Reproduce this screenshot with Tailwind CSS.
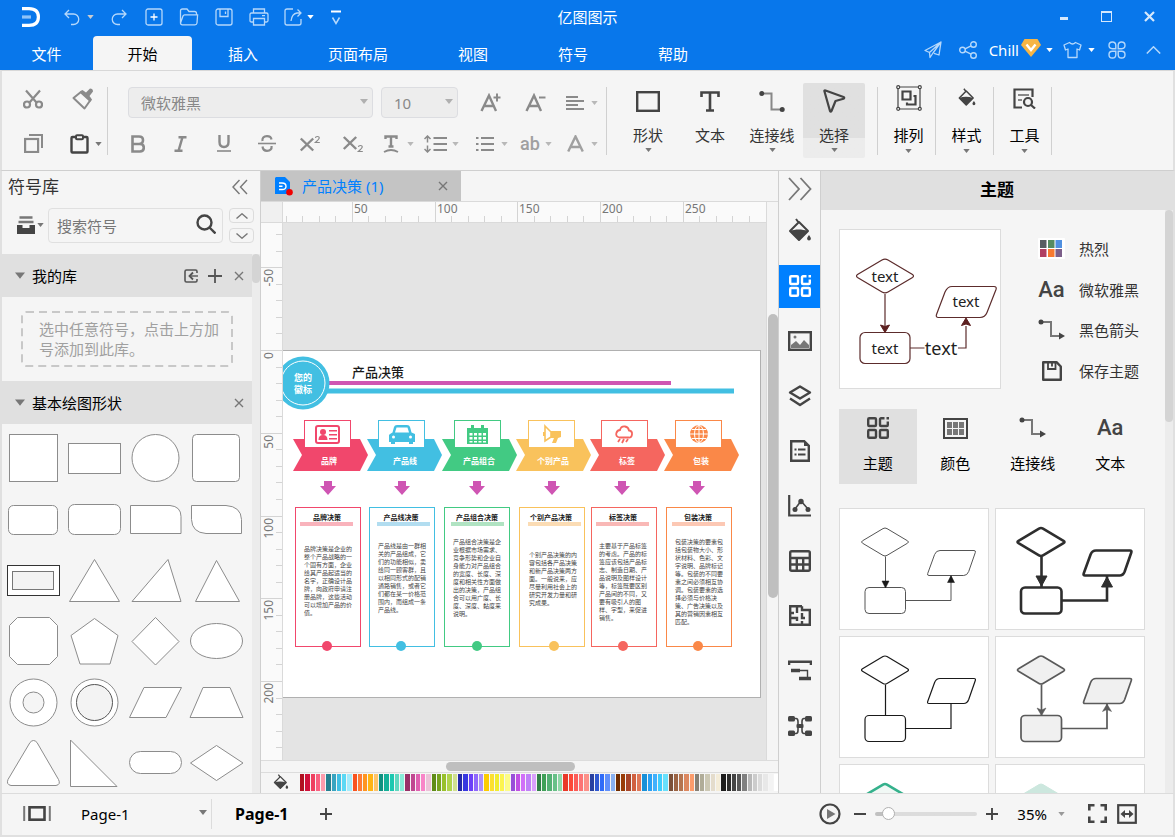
<!DOCTYPE html>
<html lang="zh-Hans">
  <head>
    <meta charset="UTF-8" />
    <meta name="viewport" content="width=device-width, initial-scale=1.0" />
    <title>亿图图示</title>
    <script src="https://cdn.jsdelivr.net/npm/@tailwindcss/browser@4"></script>
  </head>
  <body class="h-screen flex flex-col overflow-hidden bg-[#f5f5f5] text-[15px] leading-5 text-[#333] font-['Noto_Sans','Noto_Sans_CJK_SC',sans-serif]">
    <!-- 共用圖示 -->
    <svg class="hidden">
      <symbol id="caret" viewBox="0 0 8 5"><path d="M0 0h8L4 5z" fill="currentColor" /></symbol>
      <symbol id="close" viewBox="0 0 10 10"><path d="M1 1l8 8M9 1l-8 8" stroke="currentColor" stroke-width="1.4" fill="none" /></symbol>
      <symbol id="plus" viewBox="0 0 14 14"><path d="M7 0v14M0 7h14" stroke="currentColor" stroke-width="2.200" fill="none" /></symbol>
      <symbol id="bucket" viewBox="0 0 24 26">
        <path d="M8 1l3 4M11 4l9 9-9 9-9-9z" fill="none" stroke="currentColor" stroke-width="2" stroke-linejoin="round" />
        <path d="M2 13c5-2 12-2 18 0l-9 9.500z" fill="currentColor" />
        <path d="M21 17c1 1.600 1.900 2.500 1.900 3.500a1.900 1.900 0 0 1-3.800 0c0-1 .9-1.900 1.900-3.500z" fill="currentColor" />
      </symbol>
      <symbol id="themes" viewBox="0 0 22 22">
        <g fill="none" stroke="currentColor" stroke-width="2.400">
          <rect x="1.200" y="1.200" width="7.800" height="7.800" rx="1" />
          <rect x="1.200" y="13" width="7.800" height="7.800" rx="1" />
          <rect x="13" y="13" width="7.800" height="7.800" rx="1" />
          <path d="M17.500 1.200H14a1 1 0 0 0-1 1V8a1 1 0 0 0 1 1h5.800a1 1 0 0 0 1-1V4.500" />
        </g>
        <path d="M19.500 0H22v2.500h-2.500z" fill="currentColor" />
      </symbol>
      <symbol id="connector" viewBox="0 0 28 22">
        <path d="M4 3h9v14h8" fill="none" stroke="#777" stroke-width="2" />
        <circle cx="3" cy="3" r="2.500" fill="#444" />
        <path d="M21 13.500l6 3.500-6 3.500z" fill="#444" />
      </symbol>
      <symbol id="save" viewBox="0 0 20 20">
        <path d="M1.200 1.200h13.300l4.300 4.300v13.300H1.200z" fill="none" stroke="currentColor" stroke-width="2.400" stroke-linejoin="round" />
        <path d="M6 1.500v6.500h7.500V1.500M10 2v3.500" fill="none" stroke="currentColor" stroke-width="1.800" />
      </symbol>
      <symbol id="flow" viewBox="0 0 150 122">
        <path d="M44 20.600q2-1.200 4 0l20.500 12.200q2 1.200 0 2.400L48 47.400q-2 1.200-4 0L23.500 35.200q-2-1.200 0-2.400z" />
        <rect x="26" y="79.500" width="40.500" height="26" rx="4" />
        <path d="M101 42.500h34q2 0 1.300 2l-6.600 19q-1.500 4-5 4H90q-2 0-1.300-2l6.900-19q1.500-4 5.400-4z" />
        <path d="M46.500 48.500v31M66.500 92.500h45.500v-25" fill="none" />
      </symbol>
    </svg>

    <header class="bg-[#0877eb] text-white shrink-0">
      <!-- 標題列 -->
      <div class="h-9 pb-[2px] grid grid-cols-[1fr_auto_1fr] items-center">
        <div class="flex items-center text-[#b5d8fb]">
          <svg class="ml-[22px] w-[18px] h-5" viewBox="0 0 18 20" fill="none" stroke="#fff" stroke-width="3.200">
            <path d="M0 1.600h7q9.400 0 9.400 8.400T7 18.400H0" />
            <path d="M0 10h9" stroke="#8fc3f8" />
          </svg>
          <button aria-label="撤销" class="ml-[23px]">
            <svg class="w-[18px] h-[18px]" viewBox="0 0 18 18" fill="none" stroke="currentColor" stroke-width="1.300"><path d="M6 2L2 6l4 4M2 6h8.500a5 5 0 0 1 0 10.500H8" /></svg>
          </button>
          <button aria-label="撤销列表" class="ml-[6px] text-[#c9ccd0]"><svg class="w-[7px] h-[4px]"><use href="#caret" /></svg></button>
          <div class="ml-[7px] flex">
            <button aria-label="重做" class="w-[35px] flex justify-center">
              <svg class="w-[18px] h-[18px]" viewBox="0 0 18 18" fill="none" stroke="currentColor" stroke-width="1.300"><path d="M12 2l4 4-4 4M16 6H7.500a5 5 0 0 0 0 10.500H10" /></svg>
            </button>
            <button aria-label="新建" class="w-[35px] flex justify-center">
              <svg class="w-[18px] h-[18px]" viewBox="0 0 18 18" fill="none" stroke="currentColor" stroke-width="1.300"><rect x="1" y="1" width="16" height="16" rx="2" /><path d="M9 5.500v7M5.500 9h7" stroke="#fff" /></svg>
            </button>
            <button aria-label="打开" class="w-[35px] flex justify-center">
              <svg class="w-5 h-[18px]" viewBox="0 0 20 18" fill="none" stroke="currentColor" stroke-width="1.300"><path d="M1.500 15V3q0-2 2-2H8l2 2.500h5.500q2 0 2 2V7M1.500 15L4 8q.4-1.200 1.600-1.200h13L18 15q-.3 1.800-2 1.800H3.300q-1.800 0-1.800-1.800z" /></svg>
            </button>
            <button aria-label="保存" class="w-[35px] flex justify-center">
              <svg class="w-[18px] h-[18px]" viewBox="0 0 18 18" fill="none" stroke="currentColor" stroke-width="1.300"><rect x="1" y="1" width="16" height="16" rx="2" /><path d="M5 1v7.500h8V1M10.500 3.500v2.500" /></svg>
            </button>
            <button aria-label="打印" class="w-[35px] flex justify-center">
              <svg class="w-5 h-[18px]" viewBox="0 0 20 18" fill="none" stroke="currentColor" stroke-width="1.300"><path d="M4.500 5V1h11v4M4.500 14H2.500Q1 14 1 12.500v-6Q1 5 2.500 5h15Q19 5 19 6.500v6q0 1.500-1.500 1.500h-2M4.500 10.500h11V17h-11zM13 7.700h3" /></svg>
            </button>
            <button aria-label="导出" class="ml-2 flex items-center gap-[5px]">
              <svg class="w-[18px] h-[18px]" viewBox="0 0 18 18" fill="none" stroke="currentColor" stroke-width="1.300"><path d="M9 1H3Q1 1 1 3v12q0 2 2 2h12q2 0 2-2v-4M13.500 1.500l3.500 3.500-3.500 3.500M17 5h-4q-5 .5-6 8" /></svg>
              <svg class="w-[7px] h-[4px] text-white"><use href="#caret" /></svg>
            </button>
            <button aria-label="自定义" class="ml-[17px]">
              <svg class="w-[10px] h-[15px]" viewBox="0 0 10 15" fill="none" stroke="currentColor"><path d="M0 1.500h10" stroke="#fff" stroke-width="2" /><path d="M1.500 7.500L5 13.500l3.500-6" stroke-width="1.500" /></svg>
            </button>
          </div>
        </div>
        <h1>亿图图示</h1>
        <div class="flex justify-end pr-[4px] text-[#d5e8fc]">
          <button aria-label="最小化" class="w-[43px] h-6 flex items-center justify-center"><span class="w-2 h-[3px] mt-[3px] bg-current"></span></button>
          <button aria-label="最大化" class="w-[43px] h-6 pb-[2px] flex items-center justify-center"><span class="w-[11px] h-[11px] border border-t-2 border-current"></span></button>
          <button aria-label="关闭" class="w-[43px] h-6 pb-[2px] flex items-center justify-center">
            <svg class="w-[11px] h-[11px]" viewBox="0 0 11 11" stroke="currentColor" stroke-width="2.200"><path d="M1 1l9 9M10 1l-9 9" /></svg>
          </button>
        </div>
      </div>

      <!-- 功能區分頁 -->
      <div class="h-[34px] flex items-stretch">
        <nav class="flex">
          <button class="w-[93px] pt-[2px]">文件</button>
          <button class="w-[99px] pt-[2px] mr-px rounded-t-sm bg-[#f5f5f5] text-black">开始</button>
          <button class="px-[35px] pt-[2px]">插入</button>
          <button class="px-[35px] pt-[2px]">页面布局</button>
          <button class="px-[35px] pt-[2px]">视图</button>
          <button class="px-[35px] pt-[2px]">符号</button>
          <button class="px-[35px] pt-[2px]">帮助</button>
        </nav>
        <div class="ml-auto mr-[14px] pb-[6px] flex items-center text-[#b5d8fb]">
          <button aria-label="发送">
            <svg class="w-[18px] h-[18px]" viewBox="0 0 18 18" fill="none" stroke="currentColor" stroke-width="1.300" stroke-linejoin="round"><path d="M17 1L1 9.500l4.500 2L17 1l-2 13-5-1.700M5.500 11.500L6 16.500l3-4.500L17 1" /></svg>
          </button>
          <button aria-label="分享" class="ml-[17px]">
            <svg class="w-[18px] h-[18px]" viewBox="0 0 18 18" fill="none" stroke="currentColor" stroke-width="1.400"><circle cx="3.500" cy="9" r="2.800" /><circle cx="14.500" cy="3.500" r="2.800" /><circle cx="14.500" cy="14.500" r="2.800" /><path d="M6 7.800l6-3M6 10.200l6 3" /></svg>
          </button>
          <button class="ml-3 flex items-center text-white">
            Chill
            <svg class="ml-[2px] mb-1 w-5 h-[18px]" viewBox="0 0 20 18"><path d="M3.500 0h13L20 6 10 18 0 6z" fill="#f6b545" /><path d="M5.500 5.500L10 11l4.500-5.500" stroke="#fff" stroke-width="2.400" fill="none" /></svg>
            <svg class="ml-[5px] w-[7px] h-[4px]"><use href="#caret" /></svg>
          </button>
          <button aria-label="皮肤" class="ml-[10px] flex items-center">
            <svg class="w-[19px] h-[18px]" viewBox="0 0 19 18" fill="none" stroke="currentColor" stroke-width="1.300" stroke-linejoin="round"><path d="M6.500 1.500q3 3 6 0L18 4l-1.500 5L14 8v8.500H5V8L2.500 9 1 4z" /></svg>
            <svg class="ml-[6px] w-[7px] h-[4px] text-white"><use href="#caret" /></svg>
          </button>
          <button aria-label="应用" class="ml-[13px]">
            <svg class="w-[18px] h-[18px]" viewBox="0 0 18 18" fill="none" stroke="currentColor" stroke-width="1.400"><path d="M7.800 7.800H4.300A3.400 3.400 0 1 1 7.800 4.300zM10.200 7.800h3.500a3.400 3.400 0 1 0-3.500-3.500zM7.800 10.200H4.300a3.400 3.400 0 1 0 3.500 3.500zM10.200 10.200h3.500a3.400 3.400 0 1 1-3.500 3.500z" /></svg>
          </button>
          <button aria-label="收起" class="ml-5">
            <svg class="w-[15px] h-[8px]" viewBox="0 0 15 8" fill="none" stroke="currentColor" stroke-width="1.500"><path d="M.8 7.500l6.700-6.700 6.700 6.700" /></svg>
          </button>
        </div>
      </div>
    </header>

    <!-- 工具列 -->
    <section class="h-[100px] shrink-0 flex items-start border-x-2 border-[#e0e0e0] border-t border-t-[#d8d8d8] text-[#8a8a8a]">
      <div class="w-[105px] pl-[10px] pt-[5px] grid grid-cols-[42px_42px] gap-x-2 auto-rows-[45px]">
        <button aria-label="剪切" class="flex items-center justify-center">
          <svg class="w-5 h-5" viewBox="0 0 20 20" fill="none" stroke="currentColor" stroke-width="2.200"><path d="M3 1.500l10.500 12M17 1.500L6.500 13.500" /><circle cx="4" cy="15.500" r="3" /><circle cx="16" cy="15.500" r="3" /></svg>
        </button>
        <button aria-label="格式刷" class="flex items-center justify-center">
          <svg class="w-[22px] h-[22px]" viewBox="0 0 22 22"><path d="M1.500 10l8-6.500 9 8.500-6 8.500z" fill="none" stroke="currentColor" stroke-width="2" stroke-linejoin="round" /><path d="M7.500 4.500l3-2.500 3.500 2.500L18 .5q3 0 3 3L17.500 8l2.500 3.500-2 2.500z" fill="currentColor" /></svg>
        </button>
        <button aria-label="复制" class="flex items-center justify-center">
          <svg class="w-[19px] h-[19px]" viewBox="0 0 19 19" fill="none" stroke="currentColor" stroke-width="2.200"><rect x="1.100" y="5" width="13" height="13" /><path d="M5 1h13v13" stroke-width="2" /></svg>
        </button>
        <button aria-label="粘贴" class="pl-2 flex items-center gap-[6px] text-[#444]">
          <svg class="w-[19px] h-5 shrink-0" viewBox="0 0 19 20" fill="none" stroke="currentColor" stroke-width="2.400"><rect x="1.500" y="3" width="16" height="15.500" rx="1" /><rect x="6" y="1.200" width="7" height="4" rx="1" fill="#f5f5f5" stroke-width="2" /></svg>
          <svg class="w-[7px] h-[4px] shrink-0 text-[#777]"><use href="#caret" /></svg>
        </button>
      </div>
      <div class="w-px h-[68px] mt-4 bg-[#d0d0d0]"></div>

      <div class="pl-2 pr-2 pt-[6px]">
        <div class="h-[45px] pl-3 flex items-center">
          <div class="relative mt-[6px]">
            <select aria-label="字体" class="appearance-none w-[245px] h-[31px] pl-3 rounded-sm border border-[#dcdde1] bg-[#ededed] text-[#888]"><option>微软雅黑</option></select>
            <svg class="absolute right-[5px] top-3 w-2 h-[5px] text-[#b0b0b0]"><use href="#caret" /></svg>
          </div>
          <div class="relative ml-2 mt-[6px]">
            <select aria-label="字号" class="appearance-none w-[77px] h-[31px] pl-3 rounded-sm border border-[#dcdde1] bg-[#ededed] text-[#888]"><option>10</option></select>
            <svg class="absolute right-[5px] top-3 w-2 h-[5px] text-[#b0b0b0]"><use href="#caret" /></svg>
          </div>
          <button aria-label="增大字号" class="ml-[22px] mt-[6px]">
            <svg class="w-[21px] h-[19px]" viewBox="0 0 21 19" fill="none" stroke="currentColor" stroke-width="2.400"><path d="M1.500 18L9 2.500 16 18M4.500 13H13" /><path d="M17 .5v8M13.500 4.500h7" stroke-width="2" /></svg>
          </button>
          <button aria-label="减小字号" class="ml-6 mt-[6px]">
            <svg class="w-[21px] h-[19px]" viewBox="0 0 21 19" fill="none" stroke="currentColor" stroke-width="2.400"><path d="M1.500 18L9 2.500 16 18M4.500 13H13" /><path d="M14 4.500h6.500" stroke-width="2" /></svg>
          </button>
          <button aria-label="对齐" class="ml-5 mt-[6px] flex items-center gap-[7px]">
            <svg class="w-[18px] h-[14px]" viewBox="0 0 18 14" fill="none" stroke="currentColor" stroke-width="2.200"><path d="M0 1h12M0 5h18M0 9h12M0 13h18" /></svg>
            <svg class="w-[7px] h-[4px] text-[#b8b8b8]"><use href="#caret" /></svg>
          </button>
        </div>
        <div class="h-[45px] pb-[2px] flex items-center">
          <button aria-label="加粗" class="w-[43px] flex justify-center"><svg class="w-[14px] h-[18px]" viewBox="0 0 14 18" fill="none" stroke="currentColor" stroke-width="2.600"><path d="M1.500 1.500H8q4 0 4 3.700T8 9H1.500zM1.500 9H9q3.800 0 3.800 3.700T9 16.500H1.500z" /></svg></button>
          <button aria-label="斜体" class="w-[43px] flex justify-center"><svg class="w-[13px] h-[16px]" viewBox="0 0 13 16" fill="none" stroke="currentColor" stroke-width="2.400"><path d="M4.500 1.200h8M.5 14.800h8M8.500 1.200l-4 13.600" /></svg></button>
          <button aria-label="下划线" class="w-[43px] flex justify-center"><svg class="w-[14px] h-[17px]" viewBox="0 0 14 17" fill="none" stroke="currentColor"><path d="M2.500 0v7q0 5 4.500 5t4.500-5V0" stroke-width="2.400" /><path d="M0 16h14" stroke-width="1.600" /></svg></button>
          <button aria-label="删除线" class="w-[43px] flex justify-center"><svg class="w-[18px] h-[17px]" viewBox="0 0 18 17" fill="none" stroke="currentColor"><path d="M4.500 6q-.7-4.800 4.500-4.800 4 0 4.500 3.300M4.500 11.500q.5 4.300 4.500 4.300 5 0 4.600-4.800" stroke-width="2.200" /><path d="M0 8.500h18" stroke-width="1.600" /></svg></button>
          <button aria-label="上标" class="w-[43px] flex justify-center"><svg class="w-5 h-[16px] overflow-visible" viewBox="0 0 20 16" fill="none" stroke="currentColor"><path d="M.8 2.500l12.400 12M13.200 2.500L.8 14.500" stroke-width="2.400" /><path d="M15.500 2q0-1.500 1.900-1.500T19.200 2q0 1-3.800 4.500h4.400" stroke-width="1.200" /></svg></button>
          <button aria-label="下标" class="w-[43px] flex justify-center"><svg class="w-5 h-[16px] overflow-visible" viewBox="0 0 20 16" fill="none" stroke="currentColor"><path d="M.8 1l12.400 12M13.200 1L.8 13" stroke-width="2.400" /><path d="M15.500 11q0-1.500 1.900-1.500t1.800 1.500q0 1-3.800 4.500h4.400" stroke-width="1.200" /></svg></button>
          <button aria-label="文字效果" class="ml-[9px] flex items-center gap-[8px]">
            <svg class="w-[16px] h-[18px]" viewBox="0 0 16 18" fill="none" stroke="currentColor" stroke-width="2.400"><path d="M2.500 4V1.500h11V4M8 1.500v9.500M5.500 11.500h5" /><path d="M1 17q7-4 14 0" stroke-width="1.800" /></svg>
            <svg class="w-[7px] h-[4px] text-[#b8b8b8]"><use href="#caret" /></svg>
          </button>
          <button aria-label="行距" class="ml-[10px] flex items-center gap-[5px]">
            <svg class="w-[23px] h-[18px]" viewBox="0 0 23 18" fill="none" stroke="currentColor"><path d="M9.500 3H23M9.500 9H23M9.500 15H23" stroke-width="2.200" /><path d="M3.500 7.500V1M.5 4l3-3 3 3M3.500 10.500V17M.5 14l3 3 3-3" stroke-width="1.500" /></svg>
            <svg class="w-[7px] h-[4px] text-[#b8b8b8]"><use href="#caret" /></svg>
          </button>
          <button aria-label="项目符号" class="ml-[17px] flex items-center gap-[6px]">
            <svg class="w-[19px] h-[18px]" viewBox="0 0 19 18" fill="none" stroke="currentColor" stroke-width="2.200"><path d="M5 3h13M5 9h13M5 15h13M0 3h2.500M0 9h2.500M0 15h2.500" /></svg>
            <svg class="w-[7px] h-[4px] text-[#b8b8b8]"><use href="#caret" /></svg>
          </button>
          <button class="ml-3 flex items-center gap-[5px] text-lg leading-5 font-medium text-[#a0a0a0] font-['Roboto']">
            ab
            <svg class="w-[7px] h-[4px] text-[#b8b8b8]"><use href="#caret" /></svg>
          </button>
          <button aria-label="字体颜色" class="ml-[15px] flex items-center gap-[7px]">
            <svg class="w-[17px] h-[17px] text-[#a0a0a0]" viewBox="0 0 17 17" fill="none" stroke="currentColor" stroke-width="2.400"><path d="M1.200 16.500L8.500 1.500l7.300 15M4.200 12h8.600" /></svg>
            <svg class="w-[7px] h-[4px] text-[#b8b8b8]"><use href="#caret" /></svg>
          </button>
        </div>
      </div>
      <div class="w-px h-[68px] mt-4 bg-[#d0d0d0]"></div>

      <div class="ml-[10px] mr-3 mt-3 flex text-[#333]">
        <button class="w-[62px] h-[75px] flex flex-col items-center">
          <span class="mt-[3px] h-[30px] flex items-center"><svg class="w-6 h-[21px]" viewBox="0 0 24 21" fill="none" stroke="#444" stroke-width="2.400"><rect x="1.200" y="1.200" width="21.600" height="18.600" /></svg></span>
          <span class="mt-[9px]">形状</span>
          <svg class="mt-[3px] w-[7px] h-[4px] shrink-0 text-[#777]"><use href="#caret" /></svg>
        </button>
        <button class="w-[62px] h-[75px] flex flex-col items-center">
          <span class="mt-[3px] h-[30px] flex items-center"><svg class="w-5 h-[21px]" viewBox="0 0 20 21" fill="none" stroke="#444" stroke-width="2.600"><path d="M1.500 6V1.500h17V6M10 1.500v18M6 19.500h8" /></svg></span>
          <span class="mt-[9px]">文本</span>
        </button>
        <button class="w-[62px] h-[75px] flex flex-col items-center">
          <span class="mt-[3px] h-[30px] flex items-center"><svg class="w-[26px] h-[21px]" viewBox="0 0 26 21"><path d="M3 2.500h9.500v16H23" fill="none" stroke="#888" stroke-width="2" /><circle cx="2.800" cy="2.600" r="2.500" fill="#444" /><circle cx="23.200" cy="18.400" r="2.500" fill="#444" /></svg></span>
          <span class="mt-[9px]">连接线</span>
          <svg class="mt-[3px] w-[7px] h-[4px] shrink-0 text-[#777]"><use href="#caret" /></svg>
        </button>
        <button class="w-[62px] h-[75px] flex flex-col items-center rounded-xs bg-linear-to-b from-[#e0e0e0] from-[55px] to-[#ececec] to-[55px]">
          <span class="mt-[3px] h-[30px] flex items-center"><svg class="w-6 h-6" viewBox="0 0 24 24" fill="none" stroke="#444" stroke-width="2.200" stroke-linejoin="round"><path d="M2.500 2.500Q2 1 3.500 1.500l18 6.500q1.500.8 0 1.800L13.500 12l-4 10q-.8 1.300-1.500 0z" /></svg></span>
          <span class="mt-[9px]">选择</span>
          <svg class="mt-[3px] w-[7px] h-[4px] shrink-0 text-[#777]"><use href="#caret" /></svg>
        </button>
      </div>
      <div class="w-px h-[68px] mt-4 bg-[#d0d0d0]"></div>
      <button class="w-[57px] h-[75px] mt-3 pl-[4px] flex flex-col items-center text-black">
        <span class="h-[30px] flex items-center"><svg class="w-[26px] h-[26px]" viewBox="0 0 26 26" fill="none" stroke="#444"><path d="M2 2h22v22H2z" stroke-width="1.200" /><path d="M6.500 6.500h8v8h-8zM17.500 11h2v8.500H11v-2" stroke-width="2.200" /><g fill="#f5f5f5" stroke-width="1.200"><circle cx="2.200" cy="2.200" r="1.500" /><circle cx="23.800" cy="2.200" r="1.500" /><circle cx="2.200" cy="23.800" r="1.500" /><circle cx="23.800" cy="23.800" r="1.500" /></g></svg></span>
        <span class="mt-3">排列</span>
        <svg class="mt-[4px] w-[7px] h-[4px] shrink-0 text-[#777]"><use href="#caret" /></svg>
      </button>
      <div class="w-px h-[68px] mt-4 bg-[#d0d0d0]"></div>
      <button class="w-[57px] h-[75px] mt-3 pl-[4px] flex flex-col items-center text-black">
        <span class="h-[30px] flex items-center"><svg class="w-5 h-5 text-[#444]"><use href="#bucket" /></svg></span>
        <span class="mt-3">样式</span>
        <svg class="mt-[4px] w-[7px] h-[4px] shrink-0 text-[#777]"><use href="#caret" /></svg>
      </button>
      <div class="w-px h-[68px] mt-4 bg-[#d0d0d0]"></div>
      <button class="w-[57px] h-[75px] mt-3 pl-[4px] flex flex-col items-center text-black">
        <span class="h-[30px] flex items-center"><svg class="w-[23px] h-[21px]" viewBox="0 0 23 21" fill="none" stroke="#444" stroke-width="2.200"><path d="M9 19.500H1.500v-18h18V9" /><path d="M5 7h11M5 12h4" stroke="#888" stroke-width="1.800" /><circle cx="15" cy="14" r="4" /><path d="M18 17l4 3.500" /></svg></span>
        <span class="mt-3">工具</span>
        <svg class="mt-[4px] w-[7px] h-[4px] shrink-0 text-[#777]"><use href="#caret" /></svg>
      </button>
      <div class="w-px h-[68px] mt-4 bg-[#d0d0d0]"></div>
    </section>

    <main class="flex-1 min-h-0 flex border-x-2 border-[#e0e0e0] border-t border-t-[#cfcfcf]">
      <!-- 符號庫 -->
      <aside class="w-[259px] shrink-0 flex flex-col border-r border-[#cfcfcf]">
        <div class="h-[33px] pb-[2px] pl-[6px] pr-[12px] flex items-center justify-between">
          <h2 class="text-[17px]">符号库</h2>
          <button aria-label="折叠" class="text-[#777]"><svg class="w-4 h-4" viewBox="0 0 16 16" fill="none" stroke="currentColor" stroke-width="1.400"><path d="M7.500 1L1 8l6.500 7M15 1L8.500 8l6.500 7" /></svg></button>
        </div>
        <div class="h-[50px] pl-[15px] pt-1 flex items-start shrink-0">
          <button aria-label="符号分类" class="mt-2 flex items-center gap-[2px] text-[#444]">
            <svg class="w-[18px] h-[18px]" viewBox="0 0 18 18"><path d="M2.500 1.500h13M1.500 6h15" stroke="#777" stroke-width="2.600" /><path d="M0 9h5.500v3h7V9H18v9H0z" fill="currentColor" /></svg>
            <svg class="w-[7px] h-[4px] text-[#777]"><use href="#caret" /></svg>
          </button>
          <div class="relative ml-[4px]">
            <input type="text" aria-label="搜索符号" placeholder="搜索符号" class="w-[175px] h-[35px] pl-2 rounded-sm border border-[#e0e0e0] bg-[#f5f5f5] placeholder:text-[#777]" />
            <svg class="absolute right-[7px] top-[6px] w-5 h-5" viewBox="0 0 20 20" fill="none" stroke="#444" stroke-width="2.400"><circle cx="8.500" cy="8.500" r="7" /><path d="M13.500 13.500l6 6" /></svg>
          </div>
          <div class="ml-[6px] flex flex-col gap-[5px] text-[#777]">
            <button aria-label="上一个" class="w-[25px] h-[15px] flex items-center justify-center rounded-sm border border-[#dcdcdc]"><svg class="w-3 h-[6px]" viewBox="0 0 12 6" fill="none" stroke="currentColor" stroke-width="1.400"><path d="M.5 5.500L6 .8l5.500 4.700" /></svg></button>
            <button aria-label="下一个" class="w-[25px] h-[15px] flex items-center justify-center rounded-sm border border-[#dcdcdc]"><svg class="w-3 h-[6px]" viewBox="0 0 12 6" fill="none" stroke="currentColor" stroke-width="1.400"><path d="M.5.500L6 5.200 11.500.5" /></svg></button>
          </div>
        </div>
        <div class="flex-1 min-h-0 flex">
          <div class="flex-1 min-w-0 overflow-hidden">
            <div class="h-[43px] pl-[13px] pr-[8px] flex items-center bg-[#e0e0e0] text-black">
              <svg class="w-[10px] h-[7px] text-[#777]"><use href="#caret" /></svg>
              <h3 class="ml-[7px] flex-1">我的库</h3>
              <button aria-label="导入" class="text-[#555]"><svg class="w-[14px] h-[14px]" viewBox="0 0 14 14" fill="none" stroke="currentColor" stroke-width="1.600"><path d="M13 4V2.500Q13 1 11.500 1h-9Q1 1 1 2.500v9Q1 13 2.500 13h9q1.500 0 1.500-1.500V10" /><path d="M14 7H6" stroke-width="1.400" /><path d="M9 3.500L5.500 7 9 10.500" stroke-width="1.800" /></svg></button>
              <button aria-label="添加" class="ml-[10px] text-[#555]"><svg class="w-[14px] h-[14px]" viewBox="0 0 14 14" stroke="currentColor" stroke-width="1.800"><path d="M7 0v14M0 7h14" /></svg></button>
              <button aria-label="关闭我的库" class="ml-[12px] text-[#777]"><svg class="w-[10px] h-[10px]"><use href="#close" /></svg></button>
            </div>
            <div class="h-[84px] pt-[14px] px-[19px]">
              <svg class="w-[212px] h-14 absolute" fill="none" stroke="#c8c8c8" stroke-width="2" stroke-dasharray="8 5"><rect x="1" y="1" width="210" height="54" rx="4" /></svg>
              <p class="h-14 pt-2 pl-[18px] text-[#a0a0a0]">选中任意符号，点击上方加<br />号添加到此库。</p>
            </div>
            <div class="h-[43px] pl-[13px] pr-[8px] flex items-center bg-[#e0e0e0] text-black">
              <svg class="w-[10px] h-[7px] text-[#777]"><use href="#caret" /></svg>
              <h3 class="ml-[7px] flex-1">基本绘图形状</h3>
              <button aria-label="关闭基本绘图形状" class="text-[#777]"><svg class="w-[10px] h-[10px]"><use href="#close" /></svg></button>
            </div>
            <div id="shapeGrid" class="pt-1 pl-px grid grid-cols-[repeat(4,61px)] auto-rows-[61px]"></div>
          </div>
          <div class="w-2 bg-[#ececec]"><div class="h-[29px] rounded-full bg-[#d4d4d4]"></div></div>
        </div>
      </aside>

      <!-- 畫布 -->
      <section class="flex-1 min-w-0 flex flex-col">
        <div class="h-[31px] shrink-0 flex border-b border-[#dadada]">
          <div class="w-[200px] pl-[14px] pr-[13px] flex items-center bg-[#c4c4c4]">
            <svg class="w-[18px] h-[19px]" viewBox="0 0 18 19"><path d="M1 0h9l5 5v12H0V1z" fill="#0080ff" /><path d="M4 6h3q4 0 4 3.300T7 12.500H4M4 9.300h3.500" stroke="#fff" stroke-width="1.400" fill="none" /><circle cx="14.500" cy="15.200" r="3.300" fill="#f00000" /></svg>
            <span class="ml-[9px] flex-1 text-[#0080ff]">产品决策 (1)</span>
            <button aria-label="关闭文档" class="text-[#777]"><svg class="w-[10px] h-[10px]"><use href="#close" /></svg></button>
          </div>
        </div>
        <div class="flex-1 min-h-0 flex">
          <div class="flex-1 min-w-0 flex flex-col">
            <div class="h-[21px] shrink-0 flex border-b border-[#dadada] bg-[#fafafa]">
              <div class="w-[22px] bg-[#f0f0f0] border-r border-[#dadada]"></div>
              <svg id="rulerX" class="flex-1 min-w-0 h-5 overflow-visible" shape-rendering="crispEdges"></svg>
            </div>
            <div class="flex-1 min-h-0 flex">
              <div class="w-[22px] shrink-0 bg-[#fafafa] border-r border-[#dadada]"><svg id="rulerY" class="w-[21px] h-full overflow-visible" shape-rendering="crispEdges"></svg></div>
              <div class="flex-1 min-w-0 pt-[127px] overflow-hidden bg-[#e4e4e4]">
                <svg id="diagram" class="w-[478px] h-[348px] bg-white border-y border-r border-[#b0b0b0] box-border" viewBox="0 0 477 346"></svg>
              </div>
            </div>
          </div>
          <div class="w-3 pt-[112px] border-l border-[#dadada]"><div class="h-[284px] w-[10px] ml-px rounded-full bg-[#bfbfbf]"></div></div>
        </div>
        <div class="h-[13px] shrink-0 pt-px border-y border-[#dcdcdc]"><div class="ml-[185px] w-[129px] h-[9px] rounded-full bg-[#bfbfbf]"></div></div>
        <div class="h-5 shrink-0 pl-3 pb-px flex items-center">
          <button aria-label="填充" class="text-[#444]"><svg class="w-4 h-[17px]"><use href="#bucket" /></svg></button>
          <div id="palette" class="ml-[11px] flex-1 h-[17px] flex gap-px"></div>
        </div>
      </section>

      <!-- 側邊工具 -->
      <nav class="w-[43px] shrink-0 border-x border-[#cfcfcf] flex flex-col gap-3 overflow-hidden text-[#444]">
        <button aria-label="展开面板" class="h-[27px] pt-2 flex items-center justify-center shrink-0 text-[#777]"><svg class="w-6 h-6" viewBox="0 0 24 24" fill="none" stroke="currentColor" stroke-width="1.800"><path d="M1 1l10 11L1 23M12.500 1l10 11-10 11" /></svg></button>
        <button aria-label="填充" class="h-[43px] pb-[2px] flex items-center justify-center shrink-0"><svg class="w-6 h-[26px]"><use href="#bucket" /></svg></button>
        <button aria-label="主题" class="h-[43px] pb-[2px] flex items-center justify-center shrink-0 bg-[#0080ff] text-white"><svg class="w-[22px] h-[22px]"><use href="#themes" /></svg></button>
        <button aria-label="图片" class="h-[43px] pb-[2px] flex items-center justify-center shrink-0"><svg class="w-6 h-5" viewBox="0 0 24 20"><rect x="1.200" y="1.200" width="21.600" height="17.600" fill="none" stroke="currentColor" stroke-width="2.400" /><path d="M3 17v-3l5-4 4 4 4-5 5 5v3z" fill="#777" /><circle cx="7" cy="6" r="1.500" fill="#777" /></svg></button>
        <button aria-label="图层" class="h-[43px] pb-[2px] flex items-center justify-center shrink-0"><svg class="w-6 h-[22px]" viewBox="0 0 24 22" fill="none" stroke="currentColor" stroke-width="2.400" stroke-linejoin="round"><path d="M12 1.500l10 6-10 6-10-6z" /><path d="M2 13.500l10 6.500 10-6.500" /></svg></button>
        <button aria-label="页面" class="h-[43px] pb-[2px] flex items-center justify-center shrink-0"><svg class="w-5 h-[22px]" viewBox="0 0 20 22" fill="none" stroke="currentColor" stroke-width="2.400"><path d="M1.200 1.200h13l4.600 4.600v15H1.200z" /><path d="M4.500 9.500h2M4.500 14.500h2M8 9.500h7.500M8 14.500h7.500" stroke-width="2" /><path d="M14 1v5h5z" fill="currentColor" stroke="none" /></svg></button>
        <button aria-label="图表" class="h-[43px] pb-[2px] flex items-center justify-center shrink-0"><svg class="w-[23px] h-[22px]" viewBox="0 0 23 22" fill="none" stroke="currentColor"><path d="M1.200 0v20.500H23" stroke-width="2.200" /><path d="M7 14l6-8 7 8" stroke-width="1.600" /><g fill="currentColor" stroke="none"><circle cx="7" cy="14.500" r="2.500" /><circle cx="13" cy="6.500" r="2.700" /><circle cx="20" cy="14.500" r="2.500" /></g></svg></button>
        <button aria-label="表格" class="h-[43px] pb-[2px] flex items-center justify-center shrink-0"><svg class="w-[22px] h-[22px]" viewBox="0 0 22 22" fill="none" stroke="currentColor" stroke-width="2.400"><rect x="1.200" y="1.200" width="19.600" height="19.600" rx="1.500" /><path d="M1 8h20M1 14.500h20M7.800 8v13M14.200 8v13" /></svg></button>
        <button aria-label="平面图" class="h-[43px] pb-[2px] flex items-center justify-center shrink-0"><svg class="w-[22px] h-[21px]" viewBox="0 0 22 21" fill="none" stroke="currentColor" stroke-width="2.400"><path d="M13 1.200H1.200v18.600h19.600V5H13V1.200M1 8h4M8 1v7M13 8v5h3M1 13h7v3M13 16v4" /></svg></button>
        <button aria-label="甘特图" class="h-[43px] pb-[2px] flex items-center justify-center shrink-0"><svg class="w-6 h-[21px]" viewBox="0 0 24 21" fill="none" stroke="currentColor"><path d="M1 5V1.700h22V5" stroke-width="2.600" /><path d="M3 10.500h9M11 18.500h12" stroke-width="3.600" /><path d="M12 10.500h7.500v7" stroke-width="1.400" /></svg></button>
        <button aria-label="思维导图" class="h-[43px] pb-[2px] flex items-center justify-center shrink-0"><svg class="w-6 h-5" viewBox="0 0 24 20"><path d="M5 2.500h3q2 0 2 3v9q0 3-2 3H5M19 2.500h-3q-2 0-2 3v9q0 3 2 3h3" fill="none" stroke="currentColor" stroke-width="1.600" /><g fill="currentColor"><rect y="0" width="7" height="5.500" rx="1.500" /><rect x="17" y="0" width="7" height="5.500" rx="1.500" /><rect y="14.500" width="7" height="5.500" rx="1.500" /><rect x="17" y="14.500" width="7" height="5.500" rx="1.500" /><rect x="8.500" y="8" width="7" height="4" rx="1" /></g></svg></button>
      </nav>

      <!-- 主題面板 -->
      <aside class="w-[352px] shrink-0 flex flex-col">
        <h2 class="h-[39px] shrink-0 pb-[2px] flex items-center justify-center bg-[#e0e0e0] text-[17px] font-bold text-black">主题</h2>
        <div class="flex-1 min-h-0 flex">
          <div class="flex-1 min-w-0 pl-[18px] pt-[19px] overflow-hidden">
            <div class="flex">
              <svg class="w-[162px] h-[160px] shrink-0 border border-[#dcdcdc] bg-white" viewBox="1 0 160 158">
                <g fill="none" stroke="#5c2c2c" stroke-width="1.200">
                  <path d="M43 30q3-1.800 6 0l24.500 14.500q2 1.500 0 3L49 62q-3 1.800-6 0L18.500 47.500q-2-1.500 0-3z" />
                  <rect x="21" y="102.500" width="50" height="31" rx="5" />
                  <path d="M113 56.500h42q3 0 2 3l-9 23q-2 5-7 5H99.500q-3 0-2-3l8.500-22.500q2.500-5.500 7-5.500z" />
                  <path d="M46 64v33M71 118h14.500M119 118h8V96" />
                </g>
                <path d="M41.500 95l4.500 7.500 4.500-7.500-4.500 1.500zM122.500 95.500l4.500-7.500 4.500 7.500-4.500-1.500z" fill="#5c1f1f" stroke="#5c1f1f" />
                <g class="text-[15px]" text-anchor="middle" fill="#222">
                  <text x="46" y="52">text</text>
                  <text x="127" y="77">text</text>
                  <text x="46" y="124">text</text>
                  <text x="102" y="125" class="text-lg">text</text>
                </g>
              </svg>
              <div class="ml-[37px] -mt-px flex flex-col">
                <button class="h-[41px] flex items-center gap-[14px]">
                  <svg class="w-[27px] h-[21px]" viewBox="0 0 27 21"><rect width="27" height="21" rx="1" fill="#fff" /><path d="M2 2h6.500v8H2z" fill="#565c60" /><path d="M10 2h6.500v8H10z" fill="#558b60" /><path d="M17.500 2H24v8h-6.500z" fill="#5090e0" /><path d="M2 11h6.500v8H2z" fill="#b03f62" /><path d="M10 11h6.500v8H10z" fill="#f87a30" /><path d="M17.500 11H24v8h-6.500z" fill="#7c5f8a" /></svg>
                  热烈
                </button>
                <button class="h-[41px] flex items-center gap-[14px]"><span class="w-[27px] text-[22px] font-medium text-[#444] font-['Roboto']">Aa</span>微软雅黑</button>
                <button class="h-10 flex items-center gap-[14px]"><svg class="w-7 h-[22px] -mr-px"><use href="#connector" /></svg>黑色箭头</button>
                <button class="h-[41px] flex items-center gap-[14px]"><span class="w-[27px] flex justify-center text-[#444]"><svg class="w-5 h-5"><use href="#save" /></svg></span>保存主题</button>
              </div>
            </div>

            <div class="mt-[18px] w-[310px] h-[75px] grid grid-cols-4 text-black">
              <button class="pb-[2px] flex flex-col items-center bg-[#e0e0e0]"><span class="h-[38px] flex items-center text-[#444]"><svg class="w-[22px] h-[22px]"><use href="#themes" /></svg></span><span class="mt-[6px]">主题</span></button>
              <button class="pb-[2px] flex flex-col items-center"><span class="h-[38px] flex items-center"><svg class="w-[25px] h-[21px]" viewBox="0 0 25 21"><rect x="1" y="1" width="23" height="19" fill="none" stroke="#444" stroke-width="2" /><path d="M4 4h5v6H4zM10 4h5v6h-5zM16 4h5v6h-5zM4 11h5v6H4zM10 11h5v6h-5zM16 11h5v6h-5z" fill="#777" /></svg></span><span class="mt-[6px]">颜色</span></button>
              <button class="pb-[2px] flex flex-col items-center"><span class="h-[38px] flex items-center"><svg class="w-7 h-[22px]"><use href="#connector" /></svg></span><span class="mt-[6px]">连接线</span></button>
              <button class="pb-[2px] flex flex-col items-center"><span class="h-[38px] flex items-center text-[22px] font-medium text-[#444] font-['Roboto']">Aa</span><span class="mt-[6px]">文本</span></button>
            </div>

            <div class="mt-6 grid grid-cols-[150px_150px] auto-rows-[122px] gap-[6px]">
              <button aria-label="主题 1" class="border border-[#dcdcdc] bg-white"><svg class="w-[148px] h-[120px]" viewBox="1 1 148 120" fill="none" stroke="#555" stroke-width="1"><use href="#flow" width="150" height="122" /><path d="M43 73h7l-3.500 7zM108.500 74.500h7l-3.500-7z" fill="#1a1a1a" stroke="#1a1a1a" stroke-width=".5" /></svg></button>
              <button aria-label="主题 2" class="border border-[#dcdcdc] bg-white"><svg class="w-[148px] h-[120px]" viewBox="1 1 148 120" fill="none" stroke="#2e2e2e" stroke-width="2.600"><use href="#flow" width="150" height="122" /><path d="M41 68h11l-5.500 10zM106.500 79h11l-5.500-10z" fill="#2e2e2e" stroke-width="1" /></svg></button>
              <button aria-label="主题 3" class="border border-[#dcdcdc] bg-white"><svg class="w-[148px] h-[120px]" viewBox="1 1 148 120" fill="none" stroke="#1a1a1a" stroke-width="1.200"><use href="#flow" width="150" height="122" /></svg></button>
              <button aria-label="主题 4" class="border border-[#dcdcdc] bg-white"><svg class="w-[148px] h-[120px]" viewBox="1 1 148 120" fill="#f0f0f0" stroke="#5a5a5a" stroke-width="1.700"><use href="#flow" width="150" height="122" /><path d="M42 72l4.500 2 4.500-2-4.500 7.500zM107.500 75.500l4.500-2 4.500 2-4.500-7.500z" fill="#5a5a5a" stroke-width=".5" /></svg></button>
              <button aria-label="主题 5" class="border border-[#dcdcdc] bg-white"><svg class="w-[148px] h-[120px]" viewBox="1 1 148 120" fill="#f1f8f5" stroke="#35b18c" stroke-width="2.600"><use href="#flow" width="150" height="122" /></svg></button>
              <button aria-label="主题 6" class="border border-[#dcdcdc] bg-white"><svg class="w-[148px] h-[120px]" viewBox="1 1 148 120" fill="#cce7de" stroke="#cce7de" stroke-width="1"><use href="#flow" width="150" height="122" /></svg></button>
            </div>
          </div>
          <div class="w-2 bg-[#ececec]"><div class="h-[212px] rounded-full bg-[#d4d4d4]"></div></div>
        </div>
      </aside>
    </main>

    <!-- 狀態列 -->
    <footer class="h-11 shrink-0 pb-[2px] pl-[21px] pr-9 flex items-center border-x-2 border-b-2 border-[#e0e0e0] border-t border-t-[#dcdcdc] text-black">
      <button aria-label="页面缩略图"><svg class="w-7 h-[15px]" viewBox="0 0 28 15" fill="none" stroke="#444" stroke-width="2.600"><rect x="6.500" y="1.300" width="15" height="12.400" /><path d="M1.200 0v15M26.800 0v15" stroke="#777" stroke-width="2" /></svg></button>
      <div class="relative ml-[26px]">
        <select aria-label="页面" class="appearance-none w-[134px] h-[30px] pl-1 bg-transparent"><option>Page-1</option></select>
        <svg class="absolute right-[4px] top-[11px] w-2 h-[5px] text-[#777]"><use href="#caret" /></svg>
      </div>
      <div class="w-px h-[30px] bg-[#dcdcdc]"></div>
      <button class="ml-[23px] text-base leading-5 font-bold">Page-1</button>
      <button aria-label="添加页面" class="ml-8 text-[#444]"><svg class="w-3 h-3"><use href="#plus" /></svg></button>

      <div class="ml-auto flex items-center">
        <button aria-label="播放"><svg class="w-[22px] h-[22px]" viewBox="0 0 22 22"><circle cx="11" cy="11" r="9.500" fill="none" stroke="#444" stroke-width="2.200" /><path d="M8 6l8.500 5L8 16z" fill="#777" /></svg></button>
        <button aria-label="缩小" class="ml-[13px] w-3 h-5 flex items-center"><span class="w-3 h-[2px] bg-[#444]"></span></button>
        <input type="range" aria-label="缩放" min="0" max="100" value="7" class="appearance-none ml-[9px] w-[102px] h-1 rounded-full bg-linear-to-r from-[#c0c0c0] from-[12px] to-[#dcdcdc] to-[12px] [&::-webkit-slider-thumb]:appearance-none [&::-webkit-slider-thumb]:w-[13px] [&::-webkit-slider-thumb]:h-[13px] [&::-webkit-slider-thumb]:rounded-full [&::-webkit-slider-thumb]:bg-white [&::-webkit-slider-thumb]:border [&::-webkit-slider-thumb]:border-solid [&::-webkit-slider-thumb]:border-[#b0b0b0]" />
        <button aria-label="放大" class="ml-[9px] text-[#444]"><svg class="w-3 h-3"><use href="#plus" /></svg></button>
        <button class="ml-[19px] flex items-center">35%<svg class="ml-[11px] w-[7px] h-[4px] text-[#999]"><use href="#caret" /></svg></button>
        <button aria-label="全屏" class="ml-[23px]"><svg class="w-[19px] h-[19px]" viewBox="0 0 19 19" fill="none" stroke="#444" stroke-width="2.600"><path d="M1.300 6.500V1.300h5.200M12.500 1.300h5.200v5.200M17.700 12.500v5.200h-5.200M6.500 17.700H1.300v-5.200" /></svg></button>
        <button aria-label="适应宽度" class="ml-[10px]"><svg class="w-5 h-5" viewBox="0 0 20 20" fill="none" stroke="#444" stroke-width="2.200"><rect x="1.200" y="1.200" width="17.600" height="17.600" /><path d="M5 10h10" stroke-width="2" /><path d="M8 6l-4.500 4L8 14zM12 6l4.500 4-4.500 4z" fill="#444" stroke="none" /></svg></button>
      </div>
    </footer>

    <script>
      // 基本圖形
      const shapes = [
        ['方形', '<rect x="6.500" y="6.500" width="48" height="47" />'],
        ['矩形', '<rect x="4.500" y="15.500" width="52" height="30" />'],
        ['圆形', '<circle cx="30.500" cy="30" r="23.500" />'],
        ['圆角方形', '<rect x="6.500" y="6.500" width="47" height="47" rx="4" />'],
        ['圆角矩形', '<rect x="5.500" y="16.500" width="49" height="29" rx="5" />'],
        ['圆角矩形 2', '<rect x="4.500" y="15.500" width="52" height="30" rx="6" />'],
        ['单圆角矩形', '<path d="M5.500 16.500H45q11 1 11 11v17H5.500z" />'],
        ['对角圆角矩形', '<path d="M5.500 16.500H40q15 1 15.500 14v14H20q-14-1-14.500-14z" />'],
        ['框架', '<rect x="4.500" y="15.500" width="52" height="30" stroke="#333" /><rect x="9.500" y="21.500" width="41" height="18" fill="#f3f3f3" stroke="#777" />'],
        ['三角形', '<path d="M30.500 9.500L55.500 51.500H5.500z" />'],
        ['斜三角形', '<path d="M43 9.500L56 51.500H7z" />'],
        ['等腰三角形', '<path d="M30.500 10.500L53.500 51.500h-44z" />'],
        ['切角方形', '<path d="M14.500 6.500h32l8 8v31l-8 8h-32l-8-8v-31z" />'],
        ['五边形', '<path d="M30.500 7.500L54 24.500 46 53H16L7 24.500z" />'],
        ['正菱形', '<path d="M30.500 6.500L54 30.500l-23.500 23.500L7 30.500z" />'],
        ['椭圆', '<ellipse cx="30.500" cy="30" rx="26" ry="17.500" />'],
        ['圆环', '<circle cx="30.500" cy="30.500" r="23.500" /><circle cx="30.500" cy="30.500" r="10.500" fill="#f5f5f5" />'],
        ['双圆', '<circle cx="30.500" cy="30.500" r="23.500" /><circle cx="30.500" cy="30.500" r="18" fill="#f3f3f3" stroke="#555" />'],
        ['平行四边形', '<path d="M19 15.500h37.500L41 45.500H4.500z" />'],
        ['梯形', '<path d="M17 15.500h27l13 30H4z" />'],
        ['圆角三角形', '<path d="M27 9.500q3.500-4 7 0l21.500 37q2.500 5-2.500 6H8q-5-1-3-6z" />'],
        ['直角三角形', '<path d="M6.500 7v46.500H53z" />'],
        ['胶囊', '<rect x="4.500" y="18.500" width="52" height="22" rx="11" />'],
        ['菱形', '<path d="M30.500 12.500L57 30 30.500 47.500 4.500 30z" />'],
      ];
      document.getElementById('shapeGrid').innerHTML = shapes
        .map(([name, body]) => `<button aria-label="${name}"><svg class="w-[61px] h-[61px]" viewBox="0 0 61 61" fill="#fff" stroke="#8c8c8c">${body}</svg></button>`)
        .join('');

      // 標尺
      const step = 16.55;
      let rx = '';
      let ry = '';
      for (let i = 1; i <= 29; i++) {
        const x = Math.round(-14 + i * step);
        const major = i % 5 === 0;
        rx += `<path d="M${x + 0.5} ${major ? 0 : 14}V20" stroke="#d4d4d4" />`;
        if (major) rx += `<text x="${x + 2}" y="11" fill="#777">${i * 10}</text>`;
      }
      for (let i = -7; i <= 24; i++) {
        const y = Math.round(127 + i * step);
        const major = i % 5 === 0;
        ry += `<path d="M${major ? 0 : 15} ${y + 0.5}H21" stroke="#d4d4d4" />`;
        if (major) ry += `<text transform="translate(12 ${y + 2}) rotate(-90)" text-anchor="end" fill="#777">${i * 10}</text>`;
      }
      document.getElementById('rulerX').innerHTML = `<g class="text-xs">${rx}</g>`;
      document.getElementById('rulerY').innerHTML = `<g class="text-xs">${ry}</g>`;

      // 色板
      const colors =
        'b01020 d0103a ee4060 fa6080 fc9cac 258090 38a4c0 40c0e4 5cd8f4 a4ecfc f85420 ff7c34 ff9420 ffb414 ffc468 ' +
        '109080 14b098 1cc8b0 60d8c0 88ecd8 983068 c04890 e060b0 f884c8 ecc0d8 608c18 78a420 98c02c b0d44c d0e090 ' +
        '2428a8 3838e0 6c40f8 9068fc ac90f8 fccc00 fce030 f0ec30 fcf450 fcfc88 9850d8 c050e4 d070f8 c080f8 d8a0fc ' +
        '308048 40a058 54b074 68c088 90d8a8 e83828 fc4838 fc5c58 fc7474 fc9088 2840a0 3058d0 306cf8 6090fc 88b0f0 ' +
        '702c00 983c08 a84428 d06040 e07858 1890d8 28a0f4 40b0fc 40ccfc 68e0fc 7c5038 9c6444 b47450 dc8860 fc9c6c ' +
        '888074 b0ac98 ccc8b4 e4dccc f4ecd8 1c1c1c 2c2c2c 444444 585858 808080 b8b8b8 cccccc dcdcdc e8e8e8 f3f3f3 ffffff';
      document.getElementById('palette').innerHTML = colors
        .split(' ')
        .map((c) => `<span class="flex-1" style="background:#${c}"></span>`)
        .join('');

      // 產品決策圖
      const icons = [
        '<rect x="1" y="1" width="23" height="17" rx="2" fill="none" stroke="C" stroke-width="2" /><circle cx="8" cy="7" r="3" /><path d="M3.500 15q0-5 4.500-5t4.500 5zM14 5h8v1.500h-8zM14 9h8v1.500h-8zM14 13h8v1.500h-8z" />',
        '<path d="M1 9l2.500-1.500L5 2Q5.500 0 8 0h10q2.500 0 3 2l1.500 5.500L26 9v8h-2v2h-4v-2H6v2H2v-2H0v-7z" /><path d="M7.500 2.500h11l1.500 5H6z" fill="#fff" /><circle cx="4.500" cy="12" r="1.500" fill="#fff" /><circle cx="21.500" cy="12" r="1.500" fill="#fff" />',
        '<path d="M0 3h4V0h3v3h7V0h3v3h4v16H0z" /><path d="M2.500 8h3v2.500h-3zM7 8h3v2.500H7zM11.500 8h3v2.500h-3zM16 8h3v2.500h-3zM2.500 12h3v2.500h-3zM7 12h3v2.500H7zM11.500 12h3v2.500h-3zM16 12h3v2.500h-3zM2.500 16h3v1.500h-3zM7 16h3v1.500H7zM11.500 16h3v1.500h-3zM16 16h3v1.500h-3z" fill="#fff" />',
        '<path d="M2 1l6 6v5l-6 4z" fill="none" stroke="C" stroke-width="1.600" /><path d="M0 7h2v4H0zM8 6h10v6l-3 1-2 5H9l2-5H8z" />',
        '<path d="M4.500 12.500q-4-1-3.200-4.200T5 5q1-4 5-3.500 3.500.5 4 4 3.500.5 3 4t-3.500 3z" fill="none" stroke="C" stroke-width="1.800" /><path d="M5 14l-2 3M9 14l-2 4M13 14l-2 3" stroke="C" stroke-width="1.800" />',
        '<circle cx="9" cy="9" r="9" /><path d="M9 0v18M0 9h18M2 4.500h14M2 13.500h14" stroke="#fff" /><ellipse cx="9" cy="9" rx="4.500" ry="8.500" fill="none" stroke="#fff" />',
      ];
      const columns = [
        { color: '#f1476c', light: '#f9b3bc', name: '品牌', x: 10, box: 21, icon: [32, 74], label: 46, arrow: 45, card: 12, bar: 17, dot: 44, head: 44, textX: 21, textY: 200, lines: ['品牌决策是企业的', '整个产品战略的一', '个固有方面，企业', '给其产品起适当的', '名字，正确设计品', '牌，向政府申请注', '册品牌，这些活动', '可以增加产品的价', '值。'] },
        { color: '#42bfe2', light: '#b2ddf0', name: '产品线', x: 84, box: 95, icon: [106, 74], label: 122, arrow: 119, card: 86, bar: 94, dot: 118, head: 118, textX: 95, textY: 197, lines: ['产品线是由一群相', '关的产品组成，它', '们的功能相似，卖', '给同一顾客群，且', '以相同形式的配销', '通路销售，或者它', '们都在某一价格范', '围内，而组成一条', '产品线。'] },
        { color: '#42ca83', light: '#b0e3c2', name: '产品组合', x: 159, box: 171, icon: [184, 74], label: 196, arrow: 194, card: 161, bar: 168, dot: 194, head: 194, textX: 170, textY: 193, lines: ['产品组合决策是企', '业根据市场需求、', '竞争形势和企业自', '身能力对产品组合', '的宽度、长度、深', '度和相关性方面做', '出的决策，产品组', '合可以用广度、长', '度、深度、黏度来', '说明。'] },
        { color: '#f9c25c', light: '#fbdcb4', name: '个别产品', x: 233, box: 245, icon: [260, 74], label: 270, arrow: 269, card: 236, bar: 245, dot: 271, head: 268, textX: 246, textY: 206, lines: ['个别产品决策的内', '容包括各产品决策', '和新产品决策两方', '面。一般说来，应', '尽量利用社会上的', '研究开发力量和研', '究成果。'] },
        { color: '#f5665f', light: '#f9b8b6', name: '标签', x: 307, box: 318, icon: [332, 74], label: 344, arrow: 339, card: 308, bar: 313, dot: 340, head: 340, textX: 316, textY: 197, lines: ['主要基于产品标签', '的考虑。产品的标', '签应该包括产品标', '志、制造日期、产', '品说明及图样设计', '等，标签既要区别', '产品间的不同，又', '要有吸引人的图', '样、字型，来促进', '销售。'] },
        { color: '#fa8848', light: '#fcc8b4', name: '包装', x: 381, box: 392, icon: [407, 74], label: 418, arrow: 414, card: 383, bar: 389, dot: 415, head: 415, textX: 392, textY: 193, lines: ['包装决策的要素包', '括包装物大小、形', '状材料、色彩、文', '字说明、品牌标记', '等。包装的不同要', '素之间必须相互协', '调。包装要素的选', '择必须与价格决', '策、广告决策以及', '其的营销因素相互', '匹配。'] },
      ];
      let svg = `
        <path d="M40 32h348" stroke="#cf55b3" stroke-width="4" />
        <path d="M40 40h411" stroke="#42bfe2" stroke-width="5" />
        <circle cx="20" cy="32" r="26.500" fill="#42bfe2" />
        <circle cx="20" cy="32" r="22" fill="none" stroke="#fff" />
        <g class="text-[9px] font-bold" fill="#fff" text-anchor="middle"><text x="20" y="30">您的</text><text x="20" y="42">徽标</text></g>
        <text x="69" y="26" class="text-[13px] font-medium" fill="#1a1a1a">产品决策</text>`;
      columns.forEach((c, i) => {
        svg += `
          <path d="M${c.x} 88h67l8 16-8 16h-67l9-16z" fill="${c.color}" />
          <rect x="${c.box + 0.5}" y="69.500" width="46" height="27" fill="#fff" stroke="${c.color}" />
          <g transform="translate(${c.icon[0]} ${c.icon[1]})" fill="${c.color}">${icons[i].replaceAll('"C"', `"${c.color}"`)}</g>
          <text x="${c.label}" y="113" text-anchor="middle" class="text-[8px] font-bold" fill="#fff">${c.name}</text>
          <path d="M${c.arrow - 4} 130h8v5h4l-8 9-8-9h4z" fill="#cf55b3" />
          <rect x="${c.card + 0.5}" y="156.500" width="65" height="139" fill="#fff" stroke="${c.color}" />
          <rect x="${c.bar}" y="171" width="53" height="4" fill="${c.light}" />
          <text x="${c.head}" y="169" text-anchor="middle" class="text-[7px] font-bold" fill="#1a1a1a">${c.name}决策</text>
          <circle cx="${c.dot}" cy="295" r="5" fill="${c.color}" />
          <text class="text-[6px]" fill="#444">${c.lines.map((t, n) => `<tspan x="${c.textX}" y="${c.textY + n * 8}">${t}</tspan>`).join('')}</text>`;
      });
      document.getElementById('diagram').innerHTML = svg;
    </script>
  </body>
</html>
